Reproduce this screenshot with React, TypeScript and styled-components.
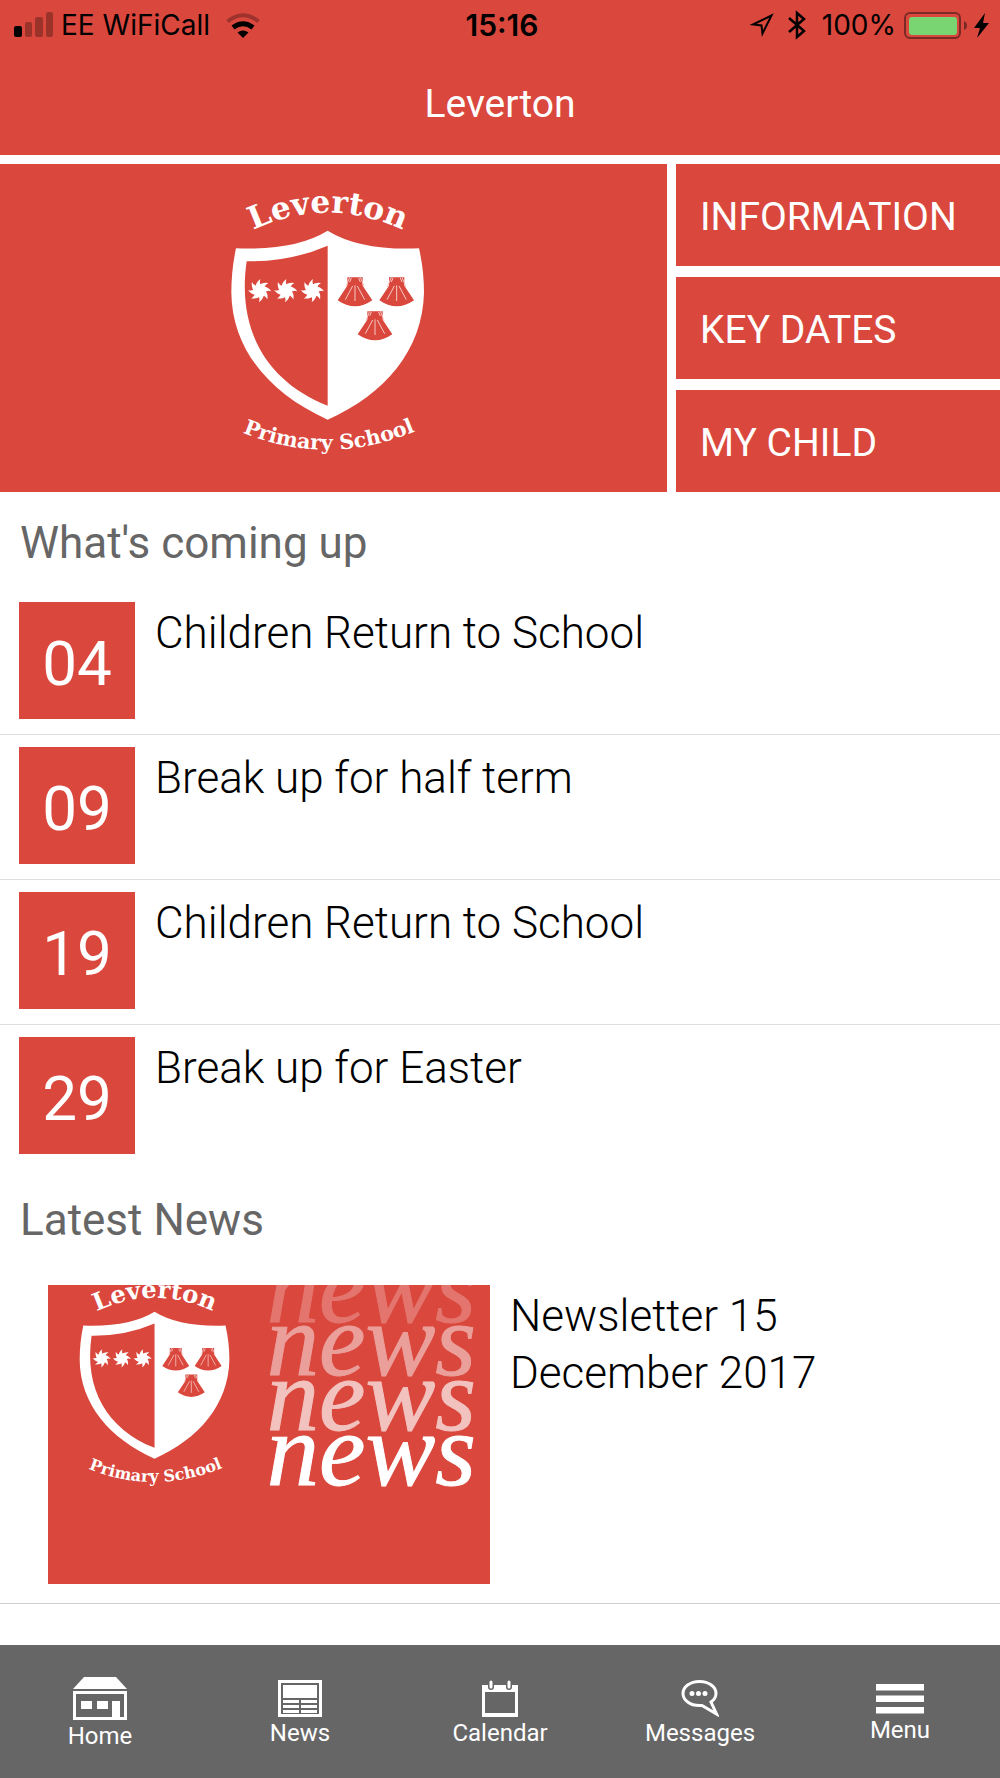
import React from "react";
import styled, { createGlobalStyle } from "styled-components";

const RED = "#da473d";
const GREY = "#666666";

const GlobalStyle = createGlobalStyle`
  * { box-sizing: border-box; }
  body { margin: 0; background: #fff; font-family: Roboto, "Liberation Sans", sans-serif; }
  h1, h2, p, ul { margin: 0; padding: 0; font-weight: 400; }
  ul { list-style: none; }
  button { border: 0; font-family: inherit; cursor: pointer; }
  svg { display: block; }
`;

const Screen = styled.div`
  display: flex;
  flex-direction: column;
  min-height: 100vh;
`;

const Header = styled.header`
  background: ${RED};
  padding-bottom: 24px;
`;

const StatusBar = styled.div`
  display: grid;
  grid-template-columns: 1fr auto 1fr;
  align-items: center;
  height: 50px;
  padding: 0 10px 0 14px;
  color: #000;
  font: 400 28px/36px Inter, "Liberation Sans", sans-serif;
`;

const StatusGroup = styled.div<{ $end?: boolean }>`
  display: flex;
  align-items: center;
  justify-content: ${(p) => (p.$end ? "flex-end" : "flex-start")};
  gap: 8px;
`;

const Carrier = styled.span`
  margin-right: 8px;
`;

const Clock = styled.time`
  font-size: 30px;
  font-weight: 600;
`;

const Icons = styled.span`
  display: flex;
  align-items: center;
  gap: 14px;
  margin-right: 8px;
`;

const Title = styled.h1`
  padding-top: 27px;
  color: #fff;
  font-size: 39px;
  line-height: 54px;
  text-align: center;
`;

const Hero = styled.section`
  display: grid;
  grid-template-columns: 667fr 324fr;
  gap: 9px;
  margin-top: 9px;
`;

const CrestPanel = styled.div`
  display: flex;
  justify-content: center;
  align-items: center;
  background: ${RED};
`;

const Shortcuts = styled.nav`
  display: grid;
  gap: 11px;
`;

const Shortcut = styled.button`
  height: 102px;
  padding: 4px 24px 0;
  background: ${RED};
  color: #fff;
  font-size: 39px;
  line-height: 48px;
  text-align: left;
`;

const SectionTitle = styled.h2`
  padding: 25px 20px 21px;
  color: ${GREY};
  font-size: 44px;
  line-height: 52px;
`;

const Event = styled.li`
  display: flex;
  gap: 20px;
  padding: 12px 19px 15px;
  border-bottom: 1px solid #dedede;
  &:last-child { border-bottom: 0; }
`;

const DateTile = styled.div`
  width: 116px;
  height: 117px;
  background: ${RED};
  color: #fff;
  font-size: 62px;
  line-height: 124px;
  text-align: center;
`;

const ItemText = styled.p`
  padding-top: 3px;
  color: #000;
  font-size: 44px;
  font-weight: 300;
  line-height: 57px;
`;

const NewsItem = styled.article`
  display: flex;
  gap: 20px;
  padding: 18px 48px 19px;
  border-bottom: 1px solid #d0d0d0;
`;

const NewsText = styled(ItemText)`
  max-width: 360px;
`;

const TabBar = styled.nav`
  display: grid;
  grid-template-columns: repeat(5, 1fr);
  position: sticky;
  bottom: 0;
  height: 133px;
  margin-top: auto;
  background: ${GREY};
`;

const Tab = styled.button`
  display: flex;
  flex-direction: column;
  align-items: center;
  justify-content: center;
  gap: 2px;
  padding: 4px 0 0;
  background: transparent;
  color: #fff;
  font-size: 24px;
  line-height: 28px;
`;

const Star = ({ x }: { x: number }) => (
  <g transform={`translate(${x} 362)`} fill="#fff">
    <circle r="15" />
    {[0, 45, 90, 135, 180, 225, 270, 315].map((a) => (
      <path key={a} d="M-13-7Q-13-24 2-35Q-3-22 8-11Z" transform={`rotate(${a})`} />
    ))}
  </g>
);

const Shell = ({ x, y }: { x: number; y: number }) => (
  <g transform={`translate(${x} ${y})`}>
    <path d="M-23 0H23V25L52 69Q0 105-52 69L-23 25Z" fill={RED} />
    <path
      d="M-16 0L-28 29M16 0L28 29M-11 2L-16 14M11 2L16 14M0 24V71M-7 26L-29 67M7 26L29 67"
      stroke="#f6c9c5"
      strokeWidth="3"
      fill="none"
    />
  </g>
);

const CrestArt = ({ id }: { id: string }) => (
  <g>
    <path id={`${id}-top`} d="M150 185Q383 71 618 185" fill="none" />
    <path id={`${id}-base`} d="M114 782Q383 898 660 778" fill="none" />
    <g fill="#fff" fontFamily='"DejaVu Serif", serif' fontWeight="700" textAnchor="middle">
      <text fontSize="94">
        <textPath href={`#${id}-top`} startOffset="50%">Leverton</textPath>
      </text>
      <text fontSize="62">
        <textPath href={`#${id}-base`} startOffset="50%">Primary School</textPath>
      </text>
    </g>
    <path
      d="M383 182Q480 242 657 235Q672 300 672 368C668 540 555 672 383 749C211 672 96 540 94 368Q94 300 108 235Q285 242 383 182Z"
      fill="#fff"
    />
    <path d="M383 227Q270 276 140 274C110 480 200 635 383 707Z" fill={RED} />
    <Star x={179} />
    <Star x={257} />
    <Star x={337} />
    <Shell x={465} y={322} />
    <Shell x={590} y={322} />
    <Shell x={525} y={424} />
  </g>
);

const Crest = () => (
  <svg width="260" height="310" viewBox="12 9 780 930" role="img" aria-label="Leverton Primary School crest">
    <CrestArt id="crest" />
  </svg>
);

const newsLines = [
  { y: 110, opacity: 0.25 },
  { y: 270, opacity: 0.48 },
  { y: 435, opacity: 0.67 },
  { y: 600, opacity: 1 },
];

const NewsPicture = () => (
  <svg width="442" height="299" viewBox="0 0 1326 897" role="img" aria-label="Leverton news">
    <rect width="1326" height="897" fill={RED} />
    <g transform="translate(22 -61) scale(.777)">
      <CrestArt id="news-crest" />
    </g>
    <g
      fill="#fff"
      stroke="#fff"
      strokeWidth="3"
      fontFamily='"Liberation Serif", serif'
      fontStyle="italic"
      fontSize="314"
    >
      {newsLines.map((l) => (
        <text key={l.y} x="656" y={l.y} opacity={l.opacity}>news</text>
      ))}
    </g>
  </svg>
);

const SignalIcon = () => (
  <svg width="39" height="26" viewBox="0 0 39 26">
    <rect x="0" y="14" width="8" height="11" rx="2" />
    <g opacity=".28">
      <rect x="11" y="10" width="7" height="15" rx="2" />
      <rect x="21" y="5" width="8" height="20" rx="2" />
      <rect x="32" y="0" width="7" height="25" rx="2" />
    </g>
  </svg>
);

const WifiIcon = () => (
  <svg width="34" height="25" viewBox="0 0 34 25">
    <path d="M1.500 8.500Q17-4 32.500 8.500" fill="none" stroke="#000" strokeWidth="4" opacity=".28" />
    <path d="M7 14.500Q17 7 27 14.500" fill="none" stroke="#000" strokeWidth="5" />
    <path d="M11.500 19.500Q17 15.500 22.500 19.500L17 25Z" />
  </svg>
);

const LocationIcon = () => (
  <svg width="25" height="25" viewBox="0 0 25 25">
    <path d="M22.500 2.500L4 11.500L12.500 12.500L13.500 20.500Z" fill="none" stroke="#000" strokeWidth="2" />
  </svg>
);

const BluetoothIcon = () => (
  <svg width="18" height="30" viewBox="0 0 18 30">
    <path d="M1 8L16 21L9 27V3L16 9L1 22" fill="none" stroke="#000" strokeWidth="2.500" />
  </svg>
);

const BatteryIcon = () => (
  <svg width="86" height="30" viewBox="0 0 86 30">
    <rect x="1" y="3" width="55" height="25" rx="5" fill="none" stroke="#7c2a25" strokeWidth="2" />
    <rect x="5" y="7" width="48" height="18" rx="3" fill="#78d572" />
    <path d="M60 11Q63 12 63 15.500Q63 19 60 20Z" fill="#7c2a25" />
    <path d="M81 3L70 18H76L73 28L85 13H79Z" />
  </svg>
);

const HomeIcon = () => (
  <svg width="54" height="43" viewBox="0 0 54 43" fill="#fff">
    <path d="M11 0H43L54 12H0Z" />
    <path d="M0 14H54V43H0ZM3 17V40H39V24H47V40H51V17Z" fillRule="evenodd" />
    <path d="M8 24H19V32H8ZM24 24H35V32H24ZM39 24H47V40H39Z" />
  </svg>
);

const NewsIcon = () => (
  <svg width="44" height="37" viewBox="0 0 44 37" fill="#fff">
    <path d="M0 0H44V37H0ZM3 3V34H41V3Z" fillRule="evenodd" />
    <path d="M5 5H39V18H5ZM5 20H21V23H5ZM5 25H21V28H5ZM5 30H21V33H5ZM23 20H39V23H23ZM23 25H39V28H23ZM23 30H39V33H23Z" />
  </svg>
);

const CalendarIcon = () => (
  <svg width="36" height="37" viewBox="0 0 36 37">
    <path d="M0 5H36V37H0ZM3 12V33H33V12Z" fill="#fff" fillRule="evenodd" />
    <path d="M9 2V7M27 2V7" stroke={GREY} strokeWidth="6" strokeLinecap="round" />
    <path d="M9 2V7M27 2V7" stroke="#fff" strokeWidth="3" strokeLinecap="round" />
  </svg>
);

const MessagesIcon = () => (
  <svg width="38" height="37" viewBox="0 0 38 37">
    <path
      d="M30 22C33.500 19.500 35 17 35 13.500C35 7 28 1.500 18.500 1.500S2 7 2 13.500S9 25.500 18.500 25.500H21L35.500 34Z"
      fill="none"
      stroke="#fff"
      strokeWidth="3"
    />
    <g fill="#fff">
      <circle cx="11" cy="13.500" r="2.500" />
      <circle cx="17.500" cy="13.500" r="2.500" />
      <circle cx="24" cy="13.500" r="2.500" />
    </g>
  </svg>
);

const MenuIcon = () => (
  <svg width="48" height="30" viewBox="0 0 48 30" fill="#fff">
    <path d="M0 0H48V6.500H0ZM0 11.500H48V18H0ZM0 23H48V29.500H0Z" />
  </svg>
);

const events = [
  { day: "04", title: "Children Return to School" },
  { day: "09", title: "Break up for half term" },
  { day: "19", title: "Children Return to School" },
  { day: "29", title: "Break up for Easter" },
];

const tabs = [
  { label: "Home", Icon: HomeIcon },
  { label: "News", Icon: NewsIcon },
  { label: "Calendar", Icon: CalendarIcon },
  { label: "Messages", Icon: MessagesIcon },
  { label: "Menu", Icon: MenuIcon },
];

export default function App() {
  return (
    <Screen>
      <GlobalStyle />
      <Header>
        <StatusBar>
          <StatusGroup>
            <SignalIcon />
            <Carrier>EE WiFiCall</Carrier>
            <WifiIcon />
          </StatusGroup>
          <Clock>15:16</Clock>
          <StatusGroup $end>
            <Icons>
              <LocationIcon />
              <BluetoothIcon />
            </Icons>
            <span>100%</span>
            <BatteryIcon />
          </StatusGroup>
        </StatusBar>
        <Title>Leverton</Title>
      </Header>
      <main>
        <Hero>
          <CrestPanel>
            <Crest />
          </CrestPanel>
          <Shortcuts>
            <Shortcut>INFORMATION</Shortcut>
            <Shortcut>KEY DATES</Shortcut>
            <Shortcut>MY CHILD</Shortcut>
          </Shortcuts>
        </Hero>
        <SectionTitle>What's coming up</SectionTitle>
        <ul>
          {events.map((e) => (
            <Event key={e.day}>
              <DateTile>{e.day}</DateTile>
              <ItemText>{e.title}</ItemText>
            </Event>
          ))}
        </ul>
        <SectionTitle>Latest News</SectionTitle>
        <NewsItem>
          <NewsPicture />
          <NewsText>Newsletter 15 December 2017</NewsText>
        </NewsItem>
      </main>
      <TabBar>
        {tabs.map(({ label, Icon }) => (
          <Tab key={label}>
            <Icon />
            {label}
          </Tab>
        ))}
      </TabBar>
    </Screen>
  );
}
